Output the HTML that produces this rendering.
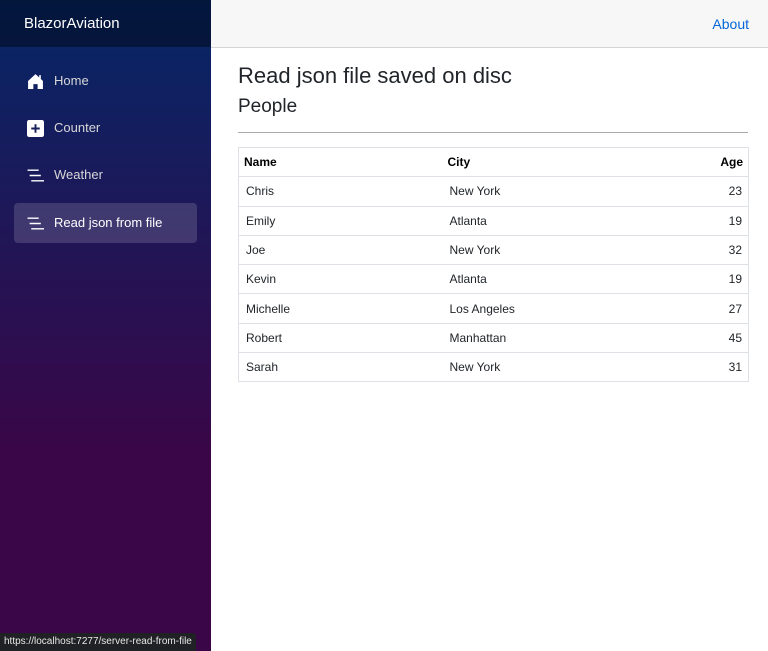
<!DOCTYPE html>
<html><head><style>
*{box-sizing:border-box;margin:0;padding:0}
body{width:768px;height:651px;overflow:hidden;font-family:"Liberation Sans",sans-serif;position:relative;background:#fff}
.side{position:absolute;left:0;top:0;width:211px;height:651px;background:linear-gradient(180deg,#052767 0%,#3a0647 70%,#3a0647 100%)}
.brand{height:47px;background:rgba(0,0,0,0.4);color:#fff;font-size:15px;line-height:47px;padding-left:24px}
.nav{position:absolute;left:14px;width:183px;height:40px;color:#d7d7d7;font-size:13px;line-height:40px;padding-left:40px;border-radius:4px}
.nav.act{background:rgba(255,255,255,0.15);color:#fff}
.ic{position:absolute;left:13px;top:12px;width:17px;height:17px}
.top{position:absolute;left:211px;top:0;right:0;height:48px;background:#f7f7f7;border-bottom:1px solid #d6d5d5}
.about{position:absolute;right:19px;top:16px;color:#0366d6;font-size:14px}
h1{position:absolute;left:238px;top:63px;font-size:22px;font-weight:400;color:#212529}
h2{position:absolute;left:238px;top:96px;font-size:19px;font-weight:400;color:#212529}
hr{position:absolute;left:238px;top:132px;width:510px;border:0;border-top:1px solid #aaa}
table{position:absolute;left:238px;top:147px;width:511px;border-collapse:collapse;font-size:12px;color:#212529;table-layout:fixed}
td,th{height:29.3px;border-top:1px solid #dee2e6;padding:0 6px;text-align:left}
th{font-weight:bold;color:#000;padding:0 5px}
table{border:1px solid #dee2e6}
td:first-child{padding-left:7px}
.r{text-align:right}
th:first-child{width:204px}
th:nth-child(2){width:210px}
td:nth-child(2){padding-left:7px}
.status{position:absolute;left:0;bottom:0;height:18px;padding:0 4px;background:#202124;color:#e8e8e8;font-size:10px;line-height:18px;border-top-right-radius:3px}
</style></head><body>
<div class="side">
<div class="brand">BlazorAviation</div>
<div class="nav" style="top:61px"><svg class="ic" viewBox="0 0 16 16"><path d="M8 1 L1 7.5 V15 H6 V10.5 H10 V15 H15 V7.5 L13 5.6 V2 H11.5 V4.2 Z" fill="#fff"/></svg>Home</div>
<div class="nav" style="top:108px"><svg class="ic" viewBox="0 0 16 16"><rect x="0" y="0" width="16" height="16" rx="2" fill="#fff"/><path d="M8 4V12M4 8H12" stroke="#1a1f5e" stroke-width="1.8"/></svg>Counter</div>
<div class="nav" style="top:155px"><svg class="ic" viewBox="0 0 16 16"><path d="M0.5 3H11M2.5 8H13M4 13H16" stroke="#fff" stroke-width="1.4"/></svg>Weather</div>
<div class="nav act" style="top:203px"><svg class="ic" viewBox="0 0 16 16"><path d="M0.5 3H11M2.5 8H13M4 13H16" stroke="#fff" stroke-width="1.4"/></svg>Read json from file</div>
</div>
<div class="top"><span class="about">About</span></div>
<h1>Read json file saved on disc</h1>
<h2>People</h2>
<hr>
<table>
<tr><th>Name</th><th>City</th><th class="r">Age</th></tr>
<tr><td>Chris</td><td>New York</td><td class="r">23</td></tr>
<tr><td>Emily</td><td>Atlanta</td><td class="r">19</td></tr>
<tr><td>Joe</td><td>New York</td><td class="r">32</td></tr>
<tr><td>Kevin</td><td>Atlanta</td><td class="r">19</td></tr>
<tr><td>Michelle</td><td>Los Angeles</td><td class="r">27</td></tr>
<tr><td>Robert</td><td>Manhattan</td><td class="r">45</td></tr>
<tr><td>Sarah</td><td>New York</td><td class="r">31</td></tr>
</table>
<div class="status">https://localhost:7277/server-read-from-file</div>
</body></html>
